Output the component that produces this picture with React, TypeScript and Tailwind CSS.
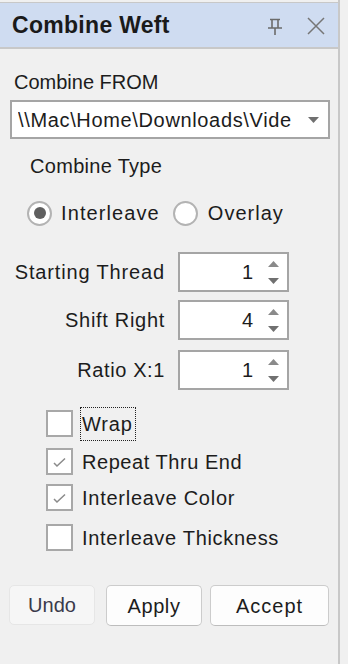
import { FC, ReactNode } from 'react';

// Small drawings used by the panel
const PinIcon = () => (
    <svg width="16" height="18" viewBox="0 0 16 18" fill="none" stroke="#6b6b6b" strokeWidth={1.6}>
        <path d="M3 2.5h10M5 2.5v8M11 2.5v8M1 11h14M8 11v7" />
    </svg>
);

const CloseIcon = () => (
    <svg width="18" height="18" viewBox="0 0 18 18" fill="none" stroke="#767676" strokeWidth={1.5}>
        <path d="M1 1l16 16M17 1L1 17" />
    </svg>
);

const DownTriangle = () => (
    <svg width="11" height="6" viewBox="0 0 11 6">
        <polygon points="0,0 11,0 5.5,6" fill="#707070" />
    </svg>
);

const UpTriangle = () => (
    <svg width="11" height="6" viewBox="0 0 11 6">
        <polygon points="0,6 11,6 5.5,0" fill="#8a8a8a" />
    </svg>
);

const Radio: FC<{ checked?: boolean }> = ({ checked }) => (
    <span className="w-[25px] h-[25px] rounded-full border-2 border-[#b3b3b3] bg-white flex items-center justify-center shrink-0">
        {checked && <span className="w-[12px] h-[12px] rounded-full bg-[#5f5f5f]" />}
    </span>
);

const CheckBox: FC<{ checked?: boolean }> = ({ checked }) => (
    <span className="w-[27px] h-[27px] border-2 border-[#a8a8a8] bg-white flex items-center justify-center shrink-0">
        {checked && (
            <svg width="23" height="23" viewBox="0 0 23 23" fill="none" stroke="#8a8a8a" strokeWidth={1.5}>
                <path d="M6 13l3 3L17 8.5" />
            </svg>
        )}
    </span>
);

const SpinRow: FC<{ label: string; value: string; className?: string; labelClass?: string }> = ({ label, value, className = '', labelClass = '' }) => (
    <div className={`flex items-center ${className}`}>
        <span className={`w-[155px] text-right leading-[24px] whitespace-nowrap ${labelClass}`}>{label}</span>
        <div className="ml-[13px] w-[111px] h-[40px] border-2 border-[#a5a5a5] bg-white flex items-center">
            <span className="ml-auto leading-[24px]">{value}</span>
            <div className="ml-[15px] mr-[8px] flex flex-col gap-[11px]">
                <UpTriangle />
                <DownTriangle />
            </div>
        </div>
    </div>
);

const CheckRow: FC<{ checked?: boolean; children: ReactNode; className?: string }> = ({ checked, children, className = '' }) => (
    <div className={`h-[27px] flex items-center pl-[36px] ${className}`}>
        <CheckBox checked={checked} />
        <span className="ml-[9px] leading-[24px]">{children}</span>
    </div>
);

export default function App() {
    return (
        <div className="w-[348px] h-[664px] bg-[#f0f0f0] overflow-hidden font-['Liberation_Sans',Arial,sans-serif] text-[20px] text-[#1c1c1c]">
            <div className="w-[340px] h-full border-r-2 border-[#c8c8c8] flex flex-col">
                {/* Title bar */}
                <div className="mt-[2px] h-[47px] border-t border-b-2 border-[#c8c8c8] bg-[#cfdcf1] flex items-center pl-[12px] pr-[13px]">
                    <span className="font-bold text-[23px] text-[#1a1a1a] leading-[28px] tracking-[0.3px]">Combine Weft</span>
                    <div className="ml-auto flex items-center gap-[24px] mt-[1px]">
                        <PinIcon />
                        <CloseIcon />
                    </div>
                </div>

                <div className="px-[10px] flex flex-col">
                    {/* Source */}
                    <span className="mt-[21px] pl-[4px] leading-[24px]">Combine FROM</span>
                    <div className="mt-[6px] w-[320px] h-[39px] border-2 border-[#a5a5a5] bg-white flex items-center pl-[6px]">
                        <span className="leading-[24px] tracking-[0.65px] whitespace-nowrap overflow-hidden">\\Mac\Home\Downloads\Vide</span>
                        <span className="ml-auto mr-[9px]">
                            <DownTriangle />
                        </span>
                    </div>

                    {/* Type */}
                    <span className="mt-[15px] pl-[20px] leading-[24px] tracking-[0.3px]">Combine Type</span>
                    <div className="mt-[22px] h-[26px] flex items-center pl-[17px]">
                        <Radio checked />
                        <span className="ml-[9px] leading-[24px] tracking-[1.1px]">Interleave</span>
                        <span className="ml-[13px]">
                            <Radio />
                        </span>
                        <span className="ml-[10px] leading-[24px] tracking-[1px]">Overlay</span>
                    </div>

                    {/* Numbers */}
                    <SpinRow className="mt-[26px]" label="Starting Thread" value="1" labelClass="tracking-[0.85px]" />
                    <SpinRow className="mt-[8px]" label="Shift Right" value="4" labelClass="tracking-[0.7px]" />
                    <SpinRow className="mt-[10px]" label="Ratio X:1" value="1" labelClass="tracking-[0.6px]" />

                    {/* Options */}
                    <CheckRow className="mt-[20px]">
                        <span className="relative tracking-[0.8px]">
                            Wrap
                            <span className="absolute -left-[2px] -right-[3px] -top-[6px] -bottom-[6px] border-[1.5px] border-dotted border-[#222]" />
                        </span>
                    </CheckRow>
                    <CheckRow className="mt-[11px]" checked>
                        <span className="tracking-[0.55px]">Repeat Thru End</span>
                    </CheckRow>
                    <CheckRow className="mt-[9px]" checked>
                        <span className="tracking-[0.75px]">Interleave Color</span>
                    </CheckRow>
                    <CheckRow className="mt-[13px]">
                        <span className="tracking-[0.7px]">Interleave Thickness</span>
                    </CheckRow>
                </div>

                {/* Buttons */}
                <div className="mt-[34px] pl-[9px] flex">
                    <button className="w-[86px] h-[40px] rounded-[5px] border border-[#e6e6e6] bg-[#f6f6f6] text-[#3a3a4a] leading-[24px]">
                        Undo
                    </button>
                    <button className="ml-[11px] w-[96px] h-[41px] rounded-[5px] border border-[#cccccc] border-b-[#bdbdbd] bg-[#fdfdfd] leading-[24px] tracking-[0.6px]">
                        Apply
                    </button>
                    <button className="ml-[8px] w-[119px] h-[41px] rounded-[5px] border border-[#cccccc] border-b-[#bdbdbd] bg-[#fdfdfd] leading-[24px] tracking-[1px]">
                        Accept
                    </button>
                </div>
            </div>
        </div>
    );
}
